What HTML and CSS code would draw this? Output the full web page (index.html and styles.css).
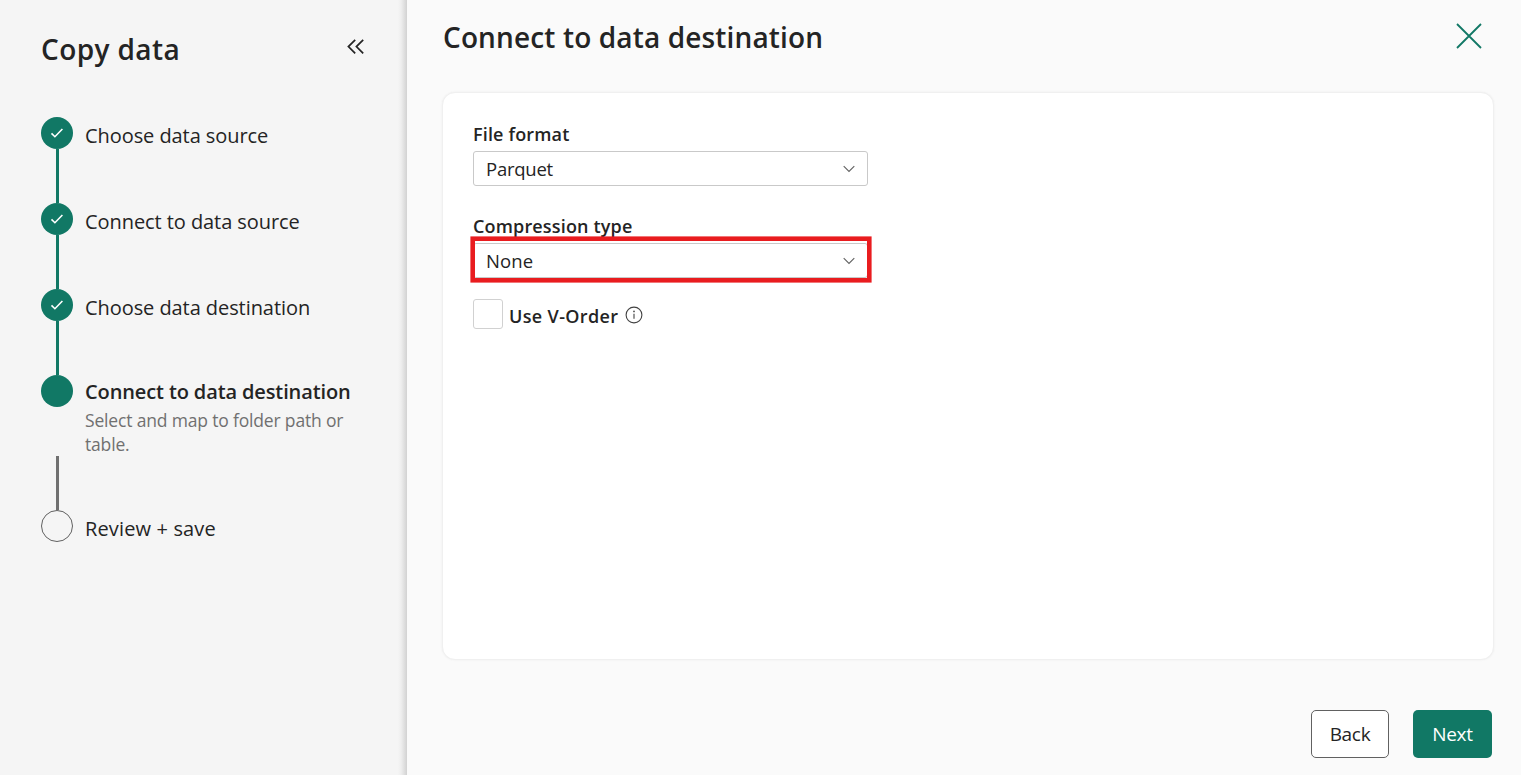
FILE: index.html
```html
<!DOCTYPE html>
<html lang="en">
<head>
<meta charset="utf-8">
<title>Copy data</title>
<link rel="stylesheet" href="styles.css">
</head>
<body>
<div class="app">
  <aside class="sidebar">
    <header class="side-head">
      <h1 class="side-title"><span>Copy data</span></h1>
      <svg class="collapse" width="18" height="16" viewBox="0 0 18 16"><path d="M8.2 .8 1.4 7.6l6.8 6.8M16.2 .8 9.4 7.6l6.8 6.8"/></svg>
    </header>
    <ol class="steps">
      <li class="step">
        <div class="rail"><i class="dot"><svg width="14" height="12" viewBox="0 0 14 12"><path d="M1.5 6.4 4.9 9.7 12.4 2"/></svg></i><i class="line"></i></div>
        <div class="label"><span>Choose data source</span></div>
      </li>
      <li class="step">
        <div class="rail"><i class="dot"><svg width="14" height="12" viewBox="0 0 14 12"><path d="M1.5 6.4 4.9 9.7 12.4 2"/></svg></i><i class="line"></i></div>
        <div class="label"><span>Connect to data source</span></div>
      </li>
      <li class="step">
        <div class="rail"><i class="dot"><svg width="14" height="12" viewBox="0 0 14 12"><path d="M1.5 6.4 4.9 9.7 12.4 2"/></svg></i><i class="line"></i></div>
        <div class="label"><span>Choose data destination</span></div>
      </li>
      <li class="step current">
        <div class="rail"><i class="dot"></i><i class="line pending"></i></div>
        <div class="label"><span>Connect to data destination</span><p class="hint"><span>Select and map to folder path or</span><br>table.</p></div>
      </li>
      <li class="step last">
        <div class="rail"><i class="dot hollow"></i></div>
        <div class="label"><span>Review + save</span></div>
      </li>
    </ol>
  </aside>
  <main class="main">
    <header class="main-head">
      <h2 class="main-title"><span>Connect to data destination</span></h2>
      <svg class="close" width="26" height="26" viewBox="0 0 26 26"><path d="M1 1l24 24M25 1 1 25"/></svg>
    </header>
    <section class="card">
      <div class="field">
        <div class="field-label"><span>File format</span></div>
        <div class="select"><span class="value">Parquet</span><svg width="12" height="8" viewBox="0 0 12 8"><path d="M.7 1.2 6 6.5l5.3-5.3"/></svg></div>
      </div>
      <div class="field">
        <div class="field-label"><span>Compression type</span></div>
        <div class="select marked"><span class="value none">None</span><svg width="12" height="8" viewBox="0 0 12 8"><path d="M.7 1.2 6 6.5l5.3-5.3"/></svg></div>
      </div>
      <div class="check-row">
        <i class="checkbox"></i>
        <span class="check-label">Use V-Order</span>
        <svg class="info" width="18" height="18" viewBox="0 0 18 18"><circle cx="9" cy="9" r="7.9"/><path d="M9 7.7v5"/><circle class="fill" cx="9" cy="5.4" r=".85"/></svg>
      </div>
    </section>
    <footer class="actions">
      <button class="btn back"><span>Back</span></button>
      <button class="btn next"><span>Next</span></button>
    </footer>
  </main>
</div>
</body>
</html>
```
FILE: styles.css
```css
* { box-sizing: border-box; }
body { margin: 0; font-family: "Segoe UI", "Open Sans", "Noto Sans", sans-serif; color: #242424; background: #fafafa; }
h1, h2, p, ol { margin: 0; padding: 0; }
ol { list-style: none; }
i { display: block; }
svg { display: block; fill: none; flex: none; }
span { white-space: nowrap; }
.app { display: flex; width: 1521px; height: 775px; overflow: hidden; }
.sidebar { width: 407px; flex: none; padding: 29px 42px 0 41px; background: linear-gradient(to right, #f5f5f5 398px, #eeeeee 401px, #d2d2d2 407px); }
.side-head { display: flex; justify-content: space-between; height: 88px; }
.side-title { font-size: 28px; line-height: 40px; font-weight: 600; letter-spacing: .4px; }
.main-title { font-size: 28px; line-height: 40px; font-weight: 600; letter-spacing: .14px; }
.collapse { margin-top: 10px; stroke: #242424; stroke-width: 1.7; }
.step { display: flex; height: 86px; }
.current { height: 135px; }
.rail { width: 32px; flex: none; display: flex; flex-direction: column; align-items: center; }
.dot { width: 32px; height: 32px; flex: none; border-radius: 50%; background: #117865; display: flex; align-items: center; justify-content: center; }
.dot svg { stroke: #fff; stroke-width: 1.6; }
.hollow { background: none; border: 1px solid #616161; }
.line { width: 3px; flex: 1; background: #117865; margin-left: 1px; }
.pending { background: #707070; margin-top: 49px; }
.label { margin-left: 12px; font-size: 20px; line-height: 28px; padding-top: 5px; letter-spacing: -.07px; }
.current .label { font-weight: 600; padding-top: 3px; letter-spacing: -.12px; }
.last .label { letter-spacing: .14px; }
.current .hint { font-size: 17.5px; line-height: 24px; font-weight: 400; color: #707070; margin-top: 2px; letter-spacing: -.17px; }
.main { flex: 1; display: flex; flex-direction: column; padding: 17px 27px 17px 35px; }
.main-head { display: flex; justify-content: space-between; height: 75px; padding-left: 1px; }
.close { margin: 6px 12px 0 0; stroke: #117865; stroke-width: 1.8; }
.card { height: 568px; background: #fff; border: 1px solid #f0f0f0; box-shadow: 0 0 2px #ececec; border-radius: 13px; padding: 28px 30px; }
.field { height: 92px; width: 395px; }
.field-label { font-size: 18px; line-height: 26px; font-weight: 600; height: 30px; letter-spacing: .16px; }
.select { position: relative; height: 35px; border: 1px solid #c9c9c9; border-radius: 3px; display: flex; align-items: center; justify-content: space-between; padding: 0 12px; font-size: 18.5px; }
.value { letter-spacing: -.25px; }
.none { letter-spacing: .1px; }
.select svg { stroke: #616161; stroke-width: 1.1; }
.marked::after { content: ""; position: absolute; inset: -7px -4px -5px -3px; border: 4px solid #e91c1f; box-shadow: 0 0 0 .6px #e91c1f; }
.check-row { display: flex; align-items: center; height: 30px; margin-top: -6px; }
.checkbox { width: 30px; height: 30px; border: 1px solid #d1d1d1; border-radius: 3px; }
.check-label { margin-left: 6px; width: 110px; font-size: 18px; line-height: 26px; font-weight: 600; padding-top: 3px; letter-spacing: .35px; }
.info { margin-left: 6px; margin-top: 1px; stroke: #424242; stroke-width: 1.1; }
.info .fill { fill: #424242; stroke: none; }
.actions { display: flex; justify-content: flex-end; gap: 24px; margin: auto 2px 0 0; }
.btn { width: 78px; height: 48px; border-radius: 5px; font: 400 19px/26px "Segoe UI", "Open Sans", sans-serif; letter-spacing: -.3px; padding: 0; color: #242424; }
.back { background: #fff; border: 1px solid #616161; }
.next { width: 79px; background: #117865; color: #fff; border: 0; }
```
